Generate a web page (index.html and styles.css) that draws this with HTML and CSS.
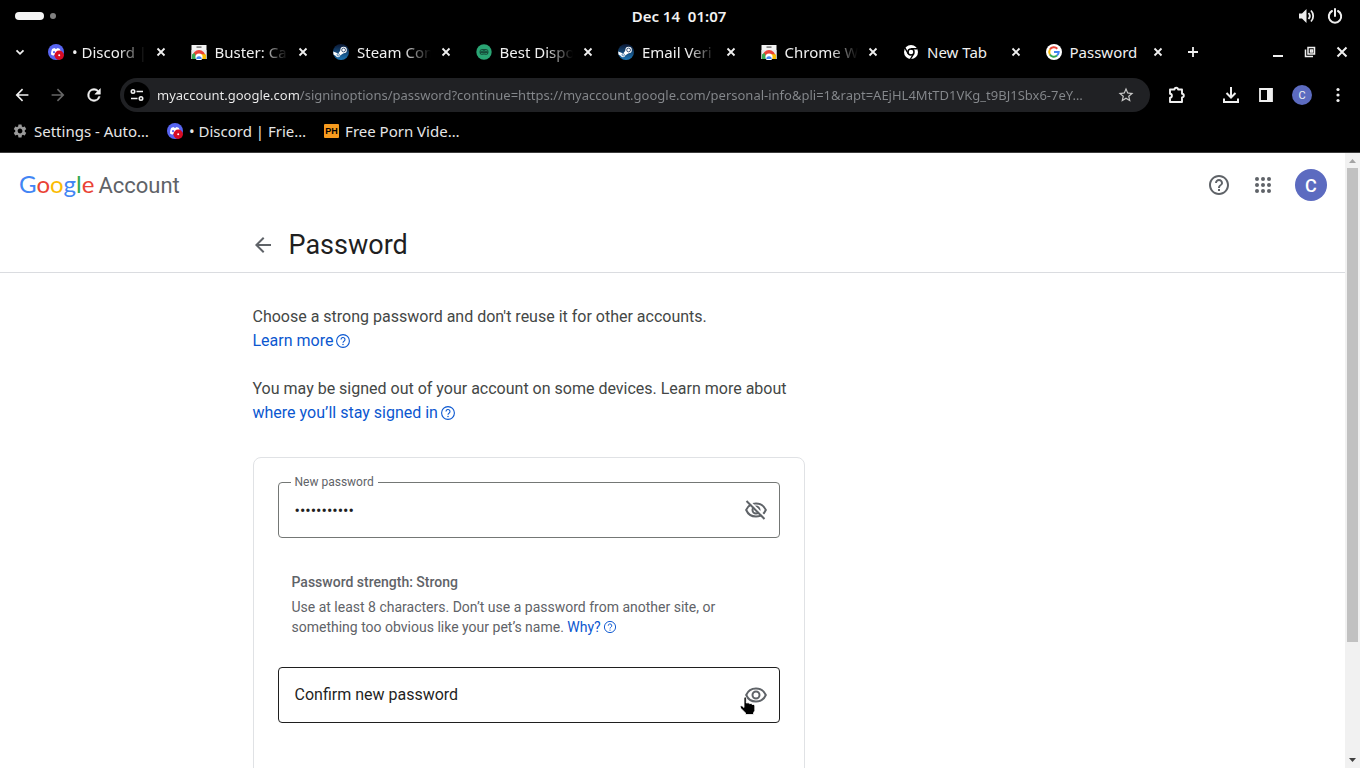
FILE: index.html
```html
<!DOCTYPE html>
<html lang="en">
<head>
	<meta charset="utf-8">
	<title>Password</title>
	<link rel="stylesheet" href="styles.css">
</head>
<body>
	<!-- shared icons -->
	<svg class="sprite" aria-hidden="true">
		<symbol id="close" viewBox="0 0 16 16"><path d="M4.500 4.500l7 7M11.500 4.500l-7 7" stroke="currentColor" stroke-width="1.800" fill="none"/></symbol>
		<symbol id="discord" viewBox="0 0 16 16">
			<circle cx="8" cy="8" r="8" fill="#5865f2"/>
			<path d="M3 10.500c0-3 .8-5 1.400-5.700L6.600 4l.5.8h1.800l.5-.8 2.200.8c.8 1 1.400 3 1.400 5.700l-2.400 1.300-.8-1H6.200l-.8 1z" fill="#fff"/>
			<circle cx="6" cy="8.200" r="1.100" fill="#5865f2"/>
			<circle cx="11.200" cy="11.200" r="4.700" fill="#d80b24"/>
			<circle cx="11.200" cy="11.200" r="1" fill="#fff"/>
		</symbol>
		<symbol id="store" viewBox="0 0 16 16">
			<path d="M.5 1h15v14H.5z" fill="#f3f3f3"/>
			<path d="M5.500 2.500h5v1.200h-5z" fill="#555"/>
			<path d="M.5 6h15v9H.5z" fill="#e8eaed"/>
			<path d="M1.500 12.500a6.500 6.500 0 0 1 13 0z" fill="#ea4335"/>
			<path d="M1 10.500l2.500-1.500L6 15H1z" fill="#34a853"/>
			<path d="M15 10.500L9 10l1 5h5z" fill="#fbbc04"/>
			<circle cx="8" cy="13" r="3.600" fill="#fff"/>
			<path d="M5.300 15a2.700 2.700 0 0 1 5.400 0z" fill="#4285f4"/>
		</symbol>
		<symbol id="steam" viewBox="0 0 16 16">
			<linearGradient id="steam-bg" x2="0" y2="1"><stop offset="0" stop-color="#0b1733"/><stop offset="1" stop-color="#1b75b5"/></linearGradient>
			<circle cx="8" cy="8" r="8" fill="url(#steam-bg)"/>
			<path d="M.2 7.600l5 2 3-4 3 3.200-4 2.700a2.300 2.300 0 0 1-4.300.5L.5 10.500z" fill="#fff"/>
			<circle cx="10.600" cy="6" r="3.200" fill="#fff"/>
			<circle cx="10.600" cy="6" r="1.900" fill="none" stroke="#12335e" stroke-width=".8"/>
			<circle cx="5.200" cy="10.800" r="1.200" fill="none" stroke="#1b5c93" stroke-width=".7"/>
		</symbol>
		<symbol id="help" viewBox="0 0 24 24"><path fill="currentColor" d="M11 18h2v-2h-2v2zm1-16C6.480 2 2 6.480 2 12s4.480 10 10 10 10-4.480 10-10S17.520 2 12 2zm0 18c-4.410 0-8-3.590-8-8s3.590-8 8-8 8 3.590 8 8-3.590 8-8 8zm0-14c-2.210 0-4 1.790-4 4h2c0-1.100.9-2 2-2s2 .9 2 2c0 2-3 1.750-3 5h2c0-2.250 3-2.500 3-5 0-2.210-1.790-4-4-4z"/></symbol>
		<symbol id="help-thin" viewBox="0 0 16 16"><g fill="none" stroke="currentColor" stroke-width="1.100"><circle cx="8" cy="8" r="6.400"/><path d="M6 6.500a2 2 0 1 1 3 1.700q-1 .6-1 1.500"/></g><circle cx="8" cy="11.500" r=".75" fill="currentColor"/></symbol>
		<symbol id="back" viewBox="2 2 20 20"><path fill="currentColor" d="M20 11H7.830l5.590-5.590L12 4l-8 8 8 8 1.410-1.410L7.830 13H20v-2z"/></symbol>
	</svg>

	<div class="system-bar">
		<div class="workspaces"><span class="pill"></span><span class="dot"></span></div>
		<time class="clock">Dec 14&nbsp; 01:07</time>
		<div class="system-icons">
			<svg width="18" height="16" viewBox="0 0 18 16"><path d="M1 5.500h3L8.500 1v14L4 10.500H1z" fill="#eee"/><path d="M10.500 5a4.500 4.500 0 0 1 0 6M13 2.500a8 8 0 0 1 0 11" fill="none" stroke="#eee" stroke-width="1.800"/></svg>
			<svg width="16" height="16" viewBox="0 0 16 16"><path d="M5 3a6.200 6.200 0 1 0 6 0M8 1v7" fill="none" stroke="#eee" stroke-width="2" stroke-linecap="round"/></svg>
		</div>
	</div>

	<div class="tab-bar">
		<button class="icon-button tab-search" aria-label="Search tabs"><svg width="12" height="12" viewBox="0 0 12 12"><path d="M2.500 4.300L6 7.800l3.500-3.500" fill="none" stroke="currentColor" stroke-width="1.800"/></svg></button>
		<div class="tabs">
			<div class="tab"><svg class="favicon"><use href="#discord"/></svg><span class="tab-title faded">• Discord |</span><button class="tab-close" aria-label="Close"><svg><use href="#close"/></svg></button></div>
			<div class="tab"><svg class="favicon"><use href="#store"/></svg><span class="tab-title faded">Buster: Ca</span><button class="tab-close" aria-label="Close"><svg><use href="#close"/></svg></button></div>
			<div class="tab"><svg class="favicon"><use href="#steam"/></svg><span class="tab-title faded">Steam Con</span><button class="tab-close" aria-label="Close"><svg><use href="#close"/></svg></button></div>
			<div class="tab"><svg class="favicon" viewBox="0 0 16 16"><circle cx="8" cy="8" r="7.700" fill="#2aa574"/><rect x="3.500" y="5" width="9" height="6" rx="3" fill="#174d3b"/><path d="M4.500 7q1.500-1 3 0M8.500 7q1.500-1 3 0M5 9.500q3 1.200 6 0" fill="none" stroke="#2aa574" stroke-width=".8"/></svg><span class="tab-title faded">Best Dispo</span><button class="tab-close" aria-label="Close"><svg><use href="#close"/></svg></button></div>
			<div class="tab"><svg class="favicon"><use href="#steam"/></svg><span class="tab-title faded">Email Veri</span><button class="tab-close" aria-label="Close"><svg><use href="#close"/></svg></button></div>
			<div class="tab"><svg class="favicon"><use href="#store"/></svg><span class="tab-title faded">Chrome W</span><button class="tab-close" aria-label="Close"><svg><use href="#close"/></svg></button></div>
			<div class="tab"><svg class="favicon" viewBox="0 0 16 16"><circle cx="8" cy="8" r="7" fill="#fff"/><circle cx="8" cy="8" r="3" fill="#fff" stroke="#000" stroke-width="1.500"/><path d="M8 4.800h6.500M5.200 9.600L2 4M10.800 9.600L7.500 15" stroke="#000" stroke-width="1.400"/></svg><span class="tab-title">New Tab</span><button class="tab-close" aria-label="Close"><svg><use href="#close"/></svg></button></div>
			<div class="tab"><svg class="favicon" viewBox="0 0 16 16"><circle cx="8" cy="8" r="8" fill="#fff"/><g fill="none" stroke-width="2"><path d="M3.900 5.600A4.700 4.700 0 0 1 11.300 4.700" stroke="#ea4335"/><path d="M3.900 10.400a4.700 4.700 0 0 1 0-4.800" stroke="#fbbc04"/><path d="M11 11.600a4.700 4.700 0 0 1-7.100-1.200" stroke="#34a853"/><path d="M8 8h4.700a4.700 4.700 0 0 1-1.700 3.600" stroke="#4285f4"/></g></svg><span class="tab-title">Password</span><button class="tab-close" aria-label="Close"><svg><use href="#close"/></svg></button></div>
		</div>
		<button class="icon-button new-tab" aria-label="New tab"><svg width="12" height="12" viewBox="0 0 12 12"><path d="M6 1v10M1 6h10" stroke="currentColor" stroke-width="1.800"/></svg></button>
		<div class="window-buttons">
			<button class="icon-button" aria-label="Minimize"><svg width="12" height="12" viewBox="0 0 12 12"><path d="M1 10h10" stroke="currentColor" stroke-width="2"/></svg></button>
			<button class="icon-button" aria-label="Restore"><svg width="12" height="12" viewBox="0 0 12 12"><path d="M4 1.500h6.500V8H4zM1.500 3.500v7H9M6.500 4h2v2h-2z" fill="none" stroke="currentColor" stroke-width="1.500"/></svg></button>
			<button class="icon-button" aria-label="Close window"><svg width="12" height="12" viewBox="0 0 12 12"><path d="M1.500 1.500l9 9M10.500 1.500l-9 9" stroke="currentColor" stroke-width="2"/></svg></button>
		</div>
	</div>

	<div class="toolbar">
		<div class="nav-buttons">
			<button class="icon-button" aria-label="Back"><svg width="16" height="16"><use href="#back"/></svg></button>
			<button class="icon-button forward" aria-label="Forward"><svg width="16" height="16" viewBox="2 2 20 20"><path fill="currentColor" d="M4 11h12.170l-5.590-5.590L12 4l8 8-8 8-1.410-1.410L16.170 13H4v-2z"/></svg></button>
			<button class="icon-button" aria-label="Reload"><svg width="16" height="16" viewBox="2 2 20 20"><path fill="currentColor" stroke="currentColor" stroke-width=".6" d="M17.650 6.350A7.960 7.960 0 0 0 12 4a8 8 0 1 0 7.730 10h-2.080A6 6 0 1 1 12 6c1.660 0 3.140.69 4.220 1.780L13 11h7V4l-2.350 2.350z"/></svg></button>
		</div>
		<div class="address-bar">
			<button class="site-info" aria-label="View site information"><svg width="16" height="16" viewBox="0 0 16 16"><g fill="none" stroke="currentColor" stroke-width="1.600"><circle cx="4" cy="4.500" r="1.700"/><path d="M7.500 4.500H14M2 11.500h6.500"/><circle cx="12" cy="11.500" r="1.700"/></g></svg></button>
			<input class="url" type="text" aria-label="Address" value="myaccount.google.com/signinoptions/password?continue=https://myaccount.google.com/personal-info&amp;pli=1&amp;rapt=AEjHL4MtTD1VKg_t9BJ1Sbx6-7eY…">
			<button class="icon-button star" aria-label="Bookmark this tab"><svg width="18" height="18" viewBox="0 0 24 24"><path fill="currentColor" d="M22 9.240l-7.190-.62L12 2 9.190 8.630 2 9.240l5.460 4.730L5.820 21 12 17.270 18.180 21l-1.630-7.030L22 9.240zM12 15.400l-3.760 2.270 1-4.280-3.320-2.880 4.380-.38L12 6.100l1.710 4.040 4.380.38-3.320 2.880 1 4.280L12 15.400z"/></svg></button>
		</div>
		<button class="icon-button extensions" aria-label="Extensions"><svg width="20" height="20" viewBox="0 0 20 20"><path d="M3 4.500h4.500a1.800 1.800 0 0 1 3.600 0H15v4.300a1.800 1.800 0 0 1 0 3.600V17H3v-4.200c2.500-.2 2.500-3.800 0-4z" fill="none" stroke="currentColor" stroke-width="1.900" stroke-linejoin="round"/></svg></button>
		<div class="browser-actions">
			<button class="icon-button" aria-label="Downloads"><svg width="18" height="18" viewBox="0 0 18 18"><path d="M9 1v10M4.500 7L9 11.500 13.500 7M2 12.500V16h14v-3.500" fill="none" stroke="currentColor" stroke-width="2"/></svg></button>
			<button class="icon-button" aria-label="Side panel"><svg width="16" height="16" viewBox="0 0 16 16"><path d="M2 2h12v12H2z" fill="none" stroke="currentColor" stroke-width="1.800"/><path d="M9 2h5v12H9z" fill="currentColor"/></svg></button>
			<button class="profile" aria-label="Profile">C</button>
			<button class="icon-button" aria-label="Menu"><svg width="16" height="16" viewBox="0 0 16 16" fill="currentColor"><circle cx="8" cy="2.500" r="1.600"/><circle cx="8" cy="8" r="1.600"/><circle cx="8" cy="13.500" r="1.600"/></svg></button>
		</div>
	</div>

	<nav class="bookmarks">
		<a href="#"><svg class="favicon" viewBox="0 0 24 24"><path fill="#9a9a9a" d="M19.140 12.940c.04-.3.060-.61.060-.94 0-.32-.02-.64-.07-.94l2.030-1.580a.49.49 0 0 0 .12-.61l-1.920-3.320a.49.49 0 0 0-.59-.22l-2.390.96c-.5-.38-1.030-.7-1.620-.94l-.36-2.540a.48.48 0 0 0-.48-.41h-3.840c-.24 0-.43.17-.47.41l-.36 2.540c-.59.24-1.130.57-1.620.94l-2.390-.96a.48.48 0 0 0-.59.22L2.740 8.870c-.12.21-.08.47.12.61l2.030 1.580c-.05.3-.09.63-.09.94s.02.64.07.94l-2.030 1.580a.49.49 0 0 0-.12.61l1.920 3.320c.12.22.37.29.59.22l2.390-.96c.5.38 1.030.7 1.620.94l.36 2.540c.05.24.24.41.48.41h3.840c.24 0 .44-.17.47-.41l.36-2.540c.59-.24 1.130-.56 1.620-.94l2.390.96c.22.08.47 0 .59-.22l1.920-3.320a.48.48 0 0 0-.12-.61l-2.010-1.580zM12 15.600A3.610 3.610 0 0 1 8.400 12c0-1.980 1.620-3.600 3.600-3.600s3.600 1.620 3.600 3.600-1.620 3.600-3.600 3.600z"/></svg>Settings - Auto…</a>
		<a href="#"><svg class="favicon"><use href="#discord"/></svg>• Discord | Frie…</a>
		<a href="#"><span class="ph-icon">PH</span>Free Porn Vide…</a>
	</nav>

	<div class="viewport">
		<div class="page">
			<header class="account-header">
				<a class="logo" href="#"><span class="google"><span class="blue">G</span><span class="red">o</span><span class="yellow">o</span><span class="blue">g</span><span class="green">l</span><span class="red">e</span></span><span>Account</span></a>
				<div class="header-actions">
					<button class="icon-button" aria-label="Help"><svg width="24" height="24"><use href="#help"/></svg></button>
					<button class="icon-button" aria-label="Google apps"><svg width="24" height="24" viewBox="0 0 24 24" fill="currentColor"><circle cx="6" cy="6" r="2"/><circle cx="12" cy="6" r="2"/><circle cx="18" cy="6" r="2"/><circle cx="6" cy="12" r="2"/><circle cx="12" cy="12" r="2"/><circle cx="18" cy="12" r="2"/><circle cx="6" cy="18" r="2"/><circle cx="12" cy="18" r="2"/><circle cx="18" cy="18" r="2"/></svg></button>
					<button class="avatar" aria-label="Google Account">C</button>
				</div>
			</header>
			<div class="title-bar">
				<div class="container title-row">
					<button class="icon-button" aria-label="Go back"><svg width="20" height="20"><use href="#back"/></svg></button>
					<h1>Password</h1>
				</div>
			</div>
			<main class="container">
				<p>Choose a strong password and don't reuse it for other accounts.<br><a href="#">Learn more<svg class="link-help"><use href="#help-thin"/></svg></a></p>
				<p>You may be signed out of your account on some devices. Learn more about<br><a href="#">where you’ll stay signed in<svg class="link-help"><use href="#help-thin"/></svg></a></p>
				<form class="card">
					<div class="field filled">
						<label for="new-password">New password</label>
						<input type="password" id="new-password" value="hunter2hunt">
						<button type="button" class="icon-button" aria-label="Hide password"><svg width="24" height="24" viewBox="0 0 24 24"><path fill="none" stroke="currentColor" stroke-width="2" d="M2.200 12C4 7.800 7.700 5.500 12 5.500s8 2.300 9.800 6.500c-1.800 4.200-5.500 6.500-9.800 6.500S4 16.200 2.200 12z"/><circle cx="12" cy="12" r="3.500" fill="none" stroke="currentColor" stroke-width="2"/><path d="M4.300 2.300l17.500 17.500" stroke="#fff" stroke-width="2"/><path d="M2.500 3l18 18" stroke="currentColor" stroke-width="2"/></svg></button>
					</div>
					<div class="strength">
						<strong>Password strength: Strong</strong>
						<span>Use at least 8 characters. Don’t use a password from another site, or something too obvious like your pet’s name. <a href="#">Why?<svg class="link-help small"><use href="#help-thin"/></svg></a></span>
					</div>
					<div class="field hovered">
						<label for="confirm-password">Confirm new password</label>
						<input type="password" id="confirm-password">
						<button type="button" class="icon-button" aria-label="Show password"><svg width="24" height="24" viewBox="0 0 24 24"><path fill="none" stroke="currentColor" stroke-width="2" d="M2.200 12C4 7.800 7.700 5.500 12 5.500s8 2.300 9.800 6.500c-1.800 4.200-5.500 6.500-9.800 6.500S4 16.200 2.200 12z"/><circle cx="12" cy="12" r="3.500" fill="none" stroke="currentColor" stroke-width="2"/></svg></button>
						<svg class="pointer" width="18" height="20" viewBox="0 0 18 20"><path d="M5 1.500Q6.300.3 7.300 1.700V7l2-.2 1 .8 1.800-.1 1 1 1.700 0 1 1.300v4.700L14.500 17v1.500h-8V17L2 12.500 1 10.500q1-1.300 2.500-.3L5 11.500z" fill="#000" stroke="#fff" stroke-width=".8"/></svg>
					</div>
				</form>
			</main>
		</div>
		<div class="scrollbar">
			<svg width="15" height="15" viewBox="0 0 15 15"><path d="M4 10l3.500-4 3.500 4z" fill="#a3a3a3"/></svg>
			<div class="track"><div class="thumb"></div></div>
			<svg width="15" height="15" viewBox="0 0 15 15"><path d="M4 5l3.500 4L11 5z" fill="#404040"/></svg>
		</div>
	</div>
</body>
</html>
```
FILE: styles.css
```css
* {
	box-sizing: border-box;
}

body {
	display: flex;
	flex-direction: column;
	height: 100vh;
	margin: 0;
	overflow: hidden;
	background-color: #000;
	color: #e6e6e6;
	font-family: "Noto Sans", sans-serif;
	font-size: 15px;
}

button {
	font-family: inherit;
	padding: 0;
	border: none;
	background: none;
	color: inherit;
	cursor: pointer;
}

a {
	color: #0b57d0;
	text-decoration: none;
}

svg {
	flex-shrink: 0;
}

.sprite {
	position: absolute;
	width: 0;
	height: 0;
}

.icon-button {
	display: flex;
	align-items: center;
	justify-content: center;
	flex-shrink: 0;
}

.favicon {
	width: 16px;
	height: 16px;
}

/* desktop bar */
.system-bar {
	display: grid;
	grid-template-columns: 1fr auto 1fr;
	align-items: center;
	height: 31px;
	padding: 0 17px 0 15px;
	flex-shrink: 0;
}

.workspaces {
	display: flex;
	align-items: center;
	gap: 6px;
}

.pill {
	width: 29px;
	height: 8px;
	border-radius: 4px;
	background-color: #f5f5f5;
}

.dot {
	width: 6px;
	height: 6px;
	border-radius: 50%;
	background-color: #808080;
}

.clock {
	font-size: 15px;
	line-height: 20px;
	font-weight: 600;
	color: #f2f2f2;
}

.system-icons {
	display: flex;
	justify-content: flex-end;
	gap: 11px;
}

/* tabs */
.tab-bar {
	display: flex;
	align-items: center;
	height: 41px;
	flex-shrink: 0;
	color: #f0f0f0;
}

.tab-search {
	width: 40px;
}

.tabs {
	display: flex;
	flex: 1;
	min-width: 0;
}

.tab {
	display: flex;
	align-items: center;
	flex: 1;
	min-width: 0;
	padding: 0 14px 0 8px;
}

.tab-title {
	flex: 1;
	min-width: 0;
	margin: 0 4px 0 8px;
	white-space: nowrap;
	overflow: hidden;
}

.faded {
	-webkit-mask-image: linear-gradient(to right, #000 60%, transparent 96%);
	mask-image: linear-gradient(to right, #000 60%, transparent 96%);
}

.tab-close,
.tab-close svg {
	display: block;
	flex-shrink: 0;
	width: 16px;
	height: 16px;
}

.new-tab {
	width: 26px;
}

.window-buttons {
	display: flex;
	gap: 20px;
	padding: 0 12px 0 66px;
}

/* toolbar */
.toolbar {
	display: flex;
	align-items: center;
	height: 46px;
	padding: 0 12px 0 14px;
	flex-shrink: 0;
	color: #f0f0f0;
}

.nav-buttons {
	display: flex;
	gap: 20px;
	width: 106px;
}

.forward {
	color: #666;
}

.address-bar {
	display: flex;
	align-items: center;
	flex: 1;
	min-width: 0;
	height: 34px;
	padding: 0 15px 0 4px;
	border-radius: 17px;
	background-color: #202124;
}

.site-info {
	display: flex;
	align-items: center;
	justify-content: center;
	flex-shrink: 0;
	width: 26px;
	height: 26px;
	border-radius: 50%;
	background-color: #000;
}

.url {
	flex: 1;
	min-width: 0;
	margin-left: 7px;
	padding: 0;
	border: none;
	outline: none;
	font-family: inherit;
	font-size: 13px;
	/* host is bright, the rest of the address is dim */
	color: transparent;
	background: linear-gradient(to right, #f0f0f0 142px, #85888c 142px);
	-webkit-background-clip: text;
	background-clip: text;
}

.star {
	color: #c8c8c8;
}

.extensions {
	margin-left: 17px;
}

.browser-actions {
	display: flex;
	align-items: center;
	gap: 18px;
	margin: 0 2px 0 35px;
}

.profile {
	width: 20px;
	height: 20px;
	border-radius: 50%;
	background-color: #5c6bc0;
	font-family: Roboto, sans-serif;
	font-size: 11px;
}

/* bookmarks */
.bookmarks {
	display: flex;
	align-items: center;
	gap: 18px;
	height: 35px;
	padding: 0 12px 8px;
	flex-shrink: 0;
	border-bottom: 1px solid #3c3c3c;
}

.bookmarks a {
	display: flex;
	align-items: center;
	gap: 6px;
	color: #e6e6e6;
}

.ph-icon {
	width: 15px;
	height: 14px;
	border-radius: 1px;
	background-color: #f79b1e;
	color: #000;
	font: bold 9px/14px "Liberation Sans", sans-serif;
	text-align: center;
}

/* page */
.viewport {
	display: flex;
	flex: 1;
	min-height: 0;
	background-color: #fff;
}

.page {
	flex: 1;
	min-width: 0;
	overflow: hidden;
	font-family: Roboto, sans-serif;
	color: #444746;
}

.account-header {
	display: flex;
	align-items: center;
	justify-content: space-between;
	height: 64px;
	padding: 0 18px 0 19px;
}

.logo {
	display: flex;
	align-items: baseline;
	gap: 4px;
	padding-bottom: 3px;
	color: #5f6368;
	font-size: 22px;
}

.google {
	font-family: Lato, sans-serif;
	font-size: 24px;
}

.blue { color: #4285f4; }
.red { color: #ea4335; }
.yellow { color: #fbbc04; }
.green { color: #34a853; }

.header-actions {
	display: flex;
	align-items: center;
	gap: 20px;
	color: #5f6368;
}

.avatar {
	width: 32px;
	height: 32px;
	border-radius: 50%;
	background-color: #5c6bc0;
	color: #fff;
	font-size: 18px;
	font-weight: 500;
}

.title-bar {
	border-bottom: 1px solid #dadce0;
}

.container {
	max-width: 840px;
	margin: 0 auto;
}

.title-row {
	display: flex;
	align-items: center;
	gap: 16px;
	height: 55px;
	color: #5f6368;
}

h1 {
	margin: 0;
	font-size: 27px;
	font-weight: 400;
	color: #1f1f1f;
}

main {
	padding-top: 32px;
}

p {
	margin: 0 0 24px;
	font-size: 16px;
	line-height: 24px;
}

.link-help {
	width: 16px;
	height: 16px;
	margin-left: 2px;
	vertical-align: -3px;
}

.link-help.small {
	width: 14px;
	height: 14px;
	vertical-align: -2px;
}

.card {
	max-width: 552px;
	margin-top: 32px;
	padding: 24px 24px 80px;
	border: 1px solid #e0e2e5;
	border-radius: 8px;
}

.field {
	position: relative;
	display: flex;
	align-items: center;
	height: 56px;
	padding: 0 11px 0 16px;
	border: 1px solid #747775;
	border-radius: 4px;
	color: #5f6368;
}

.field input {
	flex: 1;
	min-width: 0;
	padding: 0;
	border: none;
	outline: none;
	background: none;
	color: #1f1f1f;
	font-family: Roboto, sans-serif;
	font-size: 16px;
}

.field label {
	position: absolute;
	left: 16px;
	padding-bottom: 2px;
	font-size: 16px;
	color: #1f1f1f;
}

.filled label {
	top: -8px;
	left: 12px;
	padding: 0 4px;
	background-color: #fff;
	font-size: 12px;
	line-height: 14px;
	color: #5f6368;
}

.hovered {
	border-color: #1f1f1f;
}

.strength {
	padding: 34px 14px 30px;
	font-size: 14px;
	line-height: 20px;
	color: #5f6368;
}

.strength strong {
	display: block;
	margin-bottom: 5px;
	font-weight: 500;
}

/* hand cursor over the eye button */
.pointer {
	position: absolute;
	right: 22px;
	bottom: 6px;
}

.scrollbar {
	display: flex;
	flex-direction: column;
	flex-shrink: 0;
	width: 15px;
	background-color: #f1f1f1;
}

.track {
	flex: 1;
	padding: 0 2px;
}

.thumb {
	height: 81%;
	background-color: #c1c1c1;
}
```
